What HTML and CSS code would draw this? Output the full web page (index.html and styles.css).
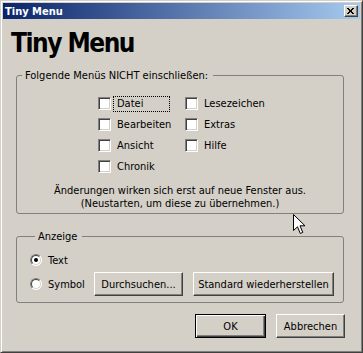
FILE: index.html
```html
<!DOCTYPE html>
<html lang="de">
<head>
<meta charset="utf-8">
<title>Tiny Menu</title>
<link rel="stylesheet" href="styles.css">
</head>
<body>
<div class="window">
  <div class="titlebar">
    <span class="title">Tiny Menu</span>
    <span class="close" aria-label="Schließen">
      <svg width="7" height="6" viewBox="0 0 7 6" shape-rendering="crispEdges">
        <path fill="#000" d="M0 0h2v1H0zM5 0h2v1H5zM1 1h2v1H1zM4 1h2v1H4zM2 2h3v2H2zM1 4h2v1H1zM4 4h2v1H4zM0 5h2v1H0zM5 5h2v1H5z"/>
      </svg>
    </span>
  </div>
  <div class="client">
    <h1 class="heading">Tiny Menu</h1>
    <fieldset class="group group-menus">
      <legend>Folgende Menüs NICHT einschließen:</legend>
      <div class="checks">
        <div class="check"><span class="box"></span><span class="lbl focus">Datei</span></div>
        <div class="check"><span class="box"></span><span class="lbl">Bearbeiten</span></div>
        <div class="check"><span class="box"></span><span class="lbl">Ansicht</span></div>
        <div class="check"><span class="box"></span><span class="lbl">Chronik</span></div>
        <div class="check"><span class="box"></span><span class="lbl">Lesezeichen</span></div>
        <div class="check"><span class="box"></span><span class="lbl">Extras</span></div>
        <div class="check"><span class="box"></span><span class="lbl">Hilfe</span></div>
      </div>
      <p class="note">Änderungen wirken sich erst auf neue Fenster aus.<br>(Neustarten, um diese zu übernehmen.)</p>
    </fieldset>
    <fieldset class="group group-display">
      <legend>Anzeige</legend>
      <div class="display-grid">
        <span class="radio checked r1"></span><span class="rlbl l1">Text</span>
        <span class="radio r2"></span><span class="rlbl l2">Symbol</span>
        <button class="btn btn-browse">Durchsuchen...</button>
        <button class="btn btn-std">Standard wiederherstellen</button>
      </div>
    </fieldset>
    <div class="actions">
      <button class="btn btn-ok">OK</button>
      <button class="btn btn-cancel">Abbrechen</button>
    </div>
  </div>
  <svg class="cursor" width="14" height="22" viewBox="0 0 14 22">
    <path d="M0.5 0.5 L0.5 16.5 L4.5 12.8 L7.3 19.5 L9.8 18.4 L7 11.8 L12 11.8 Z" fill="#fff" stroke="#000" stroke-width="1" stroke-linejoin="miter"/>
  </svg>
</div>
</body>
</html>
```

FILE: styles.css
```css
html, body {
  margin: 0;
  padding: 0;
  background: #D4D0C8;
}

body {
  font-family: "DejaVu Sans Condensed", "DejaVu Sans", sans-serif;
  font-stretch: semi-condensed;
  font-size: 11px;
  line-height: 13px;
  color: #000;
}

.window {
  position: relative;
  width: 363px;
  height: 353px;
  box-sizing: border-box;
  background: #D4D0C8;
  border: 1px solid;
  border-color: #D4D0C8 #404040 #404040 #D4D0C8;
  box-shadow: inset 1px 1px #FFFFFF, inset -1px -1px #808080;
  padding: 2px;
  display: flex;
  flex-direction: column;
}

.titlebar {
  height: 16px;
  background: linear-gradient(to right, #0A246A, #A6CAF0);
  display: flex;
  align-items: center;
  justify-content: space-between;
  padding: 0 2px 0 2px;
}

.title {
  color: #fff;
  font-weight: bold;
  font-size: 11px;
  line-height: 13px;
}

.close {
  width: 14px;
  height: 12px;
  box-sizing: border-box;
  background: #D4D0C8;
  border: 1px solid;
  border-color: #FFFFFF #404040 #404040 #FFFFFF;
  box-shadow: inset -1px -1px #808080;
  display: flex;
  align-items: center;
  justify-content: center;
  padding-bottom: 1px;
  padding-right: 1px;
}

.close svg {
  display: block;
}

.client {
  flex: 1;
  display: flex;
  flex-direction: column;
  padding: 0 16px 0 13px;
}

.heading {
  margin: 9px 0 0 -5px;
  font-size: 26px;
  line-height: 30px;
  font-weight: bold;
  letter-spacing: -1.5px;
}

.group {
  margin: 0;
  padding: 0;
  border: 1px solid #808080;
  border-radius: 3px;
  min-width: 0;
}

.group legend {
  margin-left: 5px;
  padding: 0 5px 0 3px;
  line-height: 13px;
}

.group-menus {
  margin-top: 11px;
  padding-bottom: 3px;
}

.checks {
  margin: 11px 0 0 81px;
  display: grid;
  grid-auto-flow: column;
  grid-template-rows: repeat(4, 21px);
  grid-template-columns: 87px auto;
}

.check {
  display: flex;
  align-items: center;
}

.box {
  width: 13px;
  height: 13px;
  box-sizing: border-box;
  background: #fff;
  border: 1px solid;
  border-color: #808080 #FFFFFF #FFFFFF #808080;
  box-shadow: inset 1px 1px #404040, inset -1px -1px #D4D0C8;
}

.lbl {
  margin-left: 2px;
  width: 57px;
  height: 16px;
  box-sizing: border-box;
  border: 1px dotted transparent;
  padding-left: 3px;
  line-height: 14px;
  white-space: nowrap;
}

.lbl.focus {
  border-color: #000;
}

.note {
  margin: 7px 0 0 0;
  text-align: center;
}

.group-display {
  margin-top: 16px;
  padding: 5px 0 6px 13px;
}

.display-grid {
  display: grid;
  grid-template-columns: 12px 52px 89px 151px;
  grid-template-rows: 24px 24px;
  align-items: center;
}

.r1 { grid-row: 1; grid-column: 1; }
.l1 { grid-row: 1; grid-column: 2; }
.r2 { grid-row: 2; grid-column: 1; }
.l2 { grid-row: 2; grid-column: 2; }

.rlbl {
  padding-left: 6px;
  white-space: nowrap;
}

.radio {
  position: relative;
  width: 12px;
  height: 12px;
  box-sizing: border-box;
  border-radius: 50%;
  background: #fff;
  border: 1px solid;
  border-color: #808080 #FFFFFF #FFFFFF #808080;
}

.radio::before {
  content: "";
  position: absolute;
  inset: 0;
  border-radius: 50%;
  border: 1px solid;
  border-color: #404040 #D4D0C8 #D4D0C8 #404040;
}

.radio.checked::after {
  content: "";
  position: absolute;
  left: 3px;
  top: 3px;
  width: 4px;
  height: 4px;
  border-radius: 50%;
  background: #000;
}

.btn {
  font: inherit;
  color: #000;
  margin: 0;
  padding: 0;
  height: 24px;
  box-sizing: border-box;
  background: #D4D0C8;
  border: 1px solid;
  border-color: #FFFFFF #404040 #404040 #FFFFFF;
  box-shadow: inset -1px -1px #808080;
  text-align: center;
  white-space: nowrap;
}

.btn-browse {
  grid-row: 2;
  grid-column: 3;
  width: 89px;
}

.btn-std {
  grid-row: 2;
  grid-column: 4;
  width: 141px;
  margin-left: 10px;
}

.actions {
  margin: 11px -1px 0 0;
  display: flex;
  justify-content: flex-end;
  gap: 10px;
}

.btn-ok {
  width: 71px;
  border: 1px solid #000;
  box-shadow: inset 1px 1px #FFFFFF, inset -1px -1px #404040, inset -2px -2px #808080;
}

.btn-cancel {
  width: 69px;
}

.cursor {
  position: absolute;
  left: 292px;
  top: 213px;
}
```
